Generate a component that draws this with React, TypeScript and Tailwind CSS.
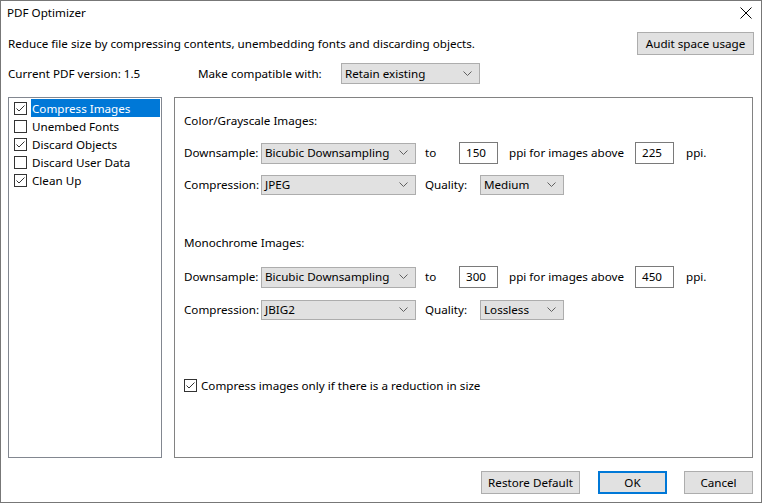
import React from 'react';

const FONT = { fontFamily: '"Noto Sans", "Open Sans", sans-serif' };

function Chevron() {
  return (
    <svg width="9" height="6" viewBox="0 0 9 6" className="shrink-0">
      <path d="M0.5 0.5 L4.5 4.5 L8.5 0.5" fill="none" stroke="#606060" strokeWidth="1" />
    </svg>
  );
}

function Select({ value, w, h = 21 }: { value: string; w: number; h?: number }) {
  return (
    <div
      className="flex items-center justify-between border border-[#adadad] bg-[#e1e1e1] pl-[3px] pr-[7px] text-black"
      style={{ width: w, height: h }}
    >
      <span>{value}</span>
      <Chevron />
    </div>
  );
}

function Box({ checked }: { checked: boolean }) {
  return (
    <span className="flex h-[13px] w-[13px] shrink-0 items-center justify-center border border-[#333333] bg-white">
      {checked && (
        <svg width="11" height="11" viewBox="0 0 11 11">
          <path d="M1.5 5.5 L4 8 L9.5 2.5" fill="none" stroke="#333333" strokeWidth="1" />
        </svg>
      )}
    </span>
  );
}

function NumBox({ value }: { value: string }) {
  return (
    <div className="flex h-[22px] w-[39px] items-center border border-[#7a7a7a] bg-white pl-[6px]">{value}</div>
  );
}

function Btn({ label, w, primary }: { label: string; w: number; primary?: boolean }) {
  return (
    <div
      className={
        'flex h-[23px] items-center justify-center bg-[#e1e1e1] ' +
        (primary ? 'border-2 border-[#0078d7]' : 'border border-[#adadad]')
      }
      style={{ width: w }}
    >
      {label}
    </div>
  );
}

function ImageGroup({
  title,
  dsTo,
  dsAbove,
  comp,
  quality,
  gap1,
  gap2,
}: {
  title: string;
  dsTo: string;
  dsAbove: string;
  comp: string;
  quality: string;
  gap1: string;
  gap2: string;
}) {
  return (
    <div>
      <div className="h-[18px] leading-[18px]">{title}</div>
      <div className={gap1 + ' flex h-[22px] items-center'}>
        <span className="w-[77px]">Downsample:</span>
        <Select value="Bicubic Downsampling" w={155} />
        <span className="ml-[9px] w-[34px]">to</span>
        <NumBox value={dsTo} />
        <span className="ml-[11px] w-[126px]">ppi for images above</span>
        <NumBox value={dsAbove} />
        <span className="ml-[12px]">ppi.</span>
      </div>
      <div className={gap2 + ' flex h-[21px] items-center'}>
        <span className="w-[77px]">Compression:</span>
        <Select value={comp} w={155} h={20} />
        <span className="ml-[9px] w-[55px]">Quality:</span>
        <Select value={quality} w={84} h={20} />
      </div>
    </div>
  );
}

export default function App() {
  const items = [
    { label: 'Compress Images', checked: true, active: true },
    { label: 'Unembed Fonts', checked: false },
    { label: 'Discard Objects', checked: true },
    { label: 'Discard User Data', checked: false },
    { label: 'Clean Up', checked: true },
  ];

  return (
    <div className="h-[503px] w-[762px] overflow-hidden border border-[#777777] bg-white text-[11.65px] text-black" style={FONT}>
      {/* Title bar */}
      <div className="flex h-[23px] items-center justify-between pl-[6px] pr-[9px]">
        <span>PDF Optimizer</span>
        <svg width="12" height="12" viewBox="0 0 12 12">
          <path d="M0.5 0.5 L11.5 11.5 M11.5 0.5 L0.5 11.5" stroke="#000" strokeWidth="1" />
        </svg>
      </div>

      {/* Description row */}
      <div className="mt-[8px] flex h-[23px] items-center justify-between pl-[7px] pr-[7px]">
        <span>Reduce file size by compressing contents, unembedding fonts and discarding objects.</span>
        <Btn label="Audit space usage" w={117} />
      </div>

      {/* Version row */}
      <div className="mt-[8px] flex h-[21px] items-center pl-[7px]">
        <span className="w-[190px]">Current PDF version: 1.5</span>
        <span className="w-[143px]">Make compatible with:</span>
        <Select value="Retain existing" w={139} />
      </div>

      {/* Panels */}
      <div className="mt-[13px] flex h-[361px] pl-[7px] pr-[8px]">
        <div className="w-[154px] border border-[#828790] bg-white pt-[1px]">
          {items.map((it) => (
            <div key={it.label} className="flex h-[18px] items-center pl-[5px]">
              <Box checked={it.checked} />
              <span
                className={
                  'ml-[4px] mr-[1px] flex h-[18px] flex-1 items-center pl-[1px] pt-[2px] ' +
                  (it.active ? 'bg-[#0078d7] text-white' : '')
                }
              >
                {it.label}
              </span>
            </div>
          ))}
        </div>

        <div className="ml-[12px] flex-1 border border-[#828282] bg-white pl-[9px] pt-[14px]">
          <ImageGroup
            title="Color/Grayscale Images:"
            dsTo="150"
            dsAbove="225"
            comp="JPEG"
            quality="Medium"
            gap1="mt-[12px]"
            gap2="mt-[10px]"
          />
          <div className="mt-[39px]">
            <ImageGroup
              title="Monochrome Images:"
              dsTo="300"
              dsAbove="450"
              comp="JBIG2"
              quality="Lossless"
              gap1="mt-[14px]"
              gap2="mt-[11px]"
            />
          </div>
          <div className="mt-[56px] flex h-[18px] items-center">
            <Box checked={true} />
            <span className="ml-[4px] pt-[2px]">Compress images only if there is a reduction in size</span>
          </div>
        </div>
      </div>

      {/* Footer */}
      <div className="mt-[13px] flex items-center justify-end pr-[8px]">
        <Btn label="Restore Default" w={99} />
        <div className="ml-[18px]">
          <Btn label="OK" w={69} primary />
        </div>
        <div className="ml-[17px]">
          <Btn label="Cancel" w={69} />
        </div>
      </div>
    </div>
  );
}
